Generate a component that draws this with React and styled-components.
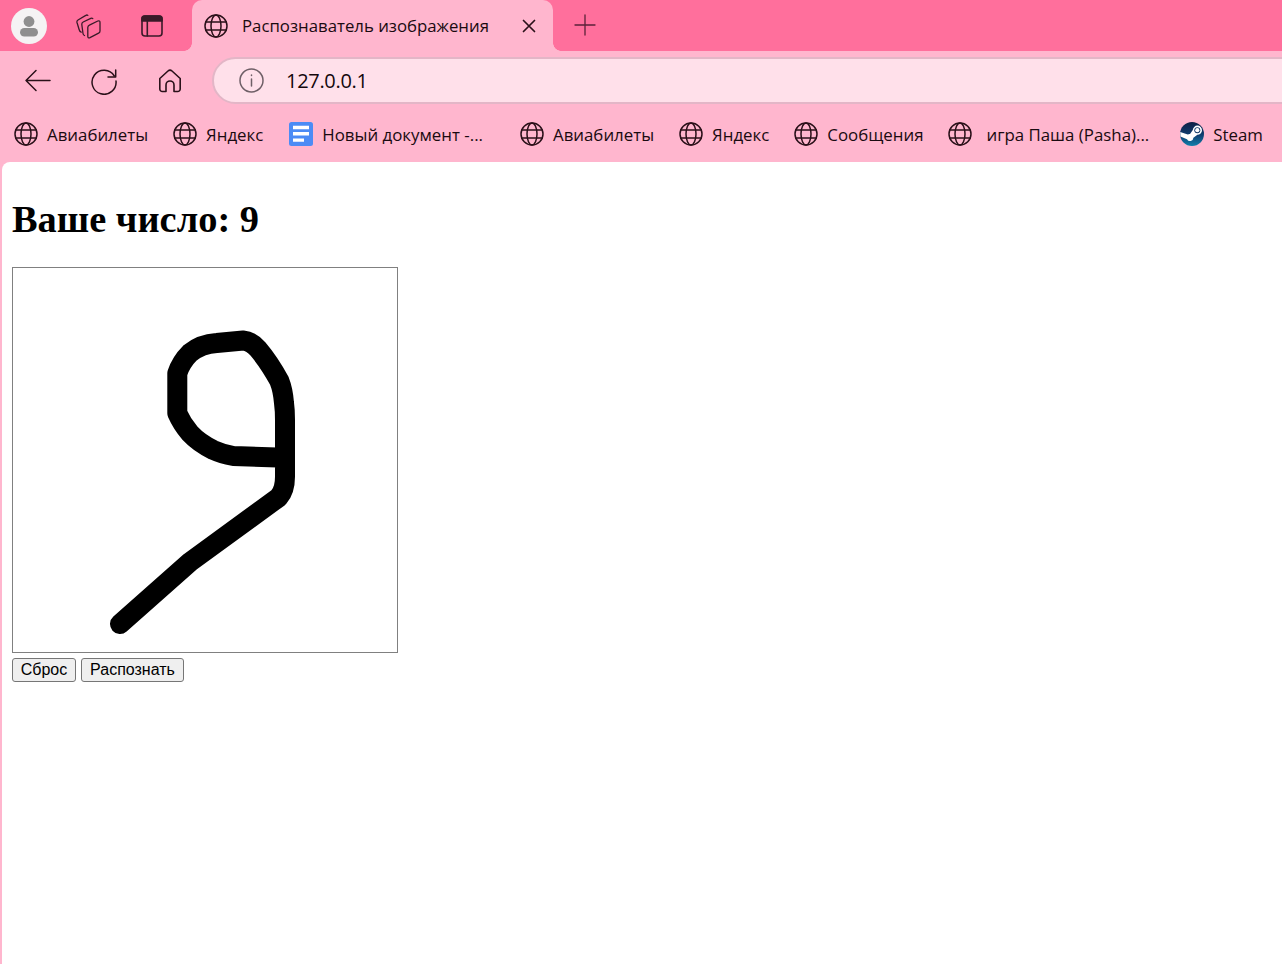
import React from "react";
import styled, { createGlobalStyle } from "styled-components";

const GlobalStyle = createGlobalStyle`
  html, body {
    margin: 0;
    padding: 0;
    height: 100%;
    overflow: hidden;
  }
  #root {
    height: 100%;
  }
`;

const Window = styled.div`
  height: 964px;
  display: flex;
  flex-direction: column;
  background: #ffb6ce;
  font-family: "Open Sans", "Noto Sans", sans-serif;
  color: #1a0a10;
  overflow: hidden;
`;

const TabStrip = styled.div`
  height: 51px;
  flex: none;
  display: flex;
  align-items: stretch;
  background: #ff6f9c;
`;

const StripLeft = styled.div`
  width: 192px;
  flex: none;
  display: flex;
  align-items: center;
  padding-left: 11px;
  box-sizing: border-box;
`;

const Avatar = styled.div`
  width: 36px;
  height: 36px;
  border-radius: 50%;
  background: #f5f3f4;
  display: flex;
  align-items: center;
  justify-content: center;
`;

const StripButton = styled.div`
  width: 26px;
  height: 26px;
  display: flex;
  align-items: center;
  justify-content: center;
  margin-left: ${(p) => p.$gap}px;
`;

const Tab = styled.div`
  position: relative;
  width: 361px;
  flex: none;
  display: flex;
  align-items: center;
  box-sizing: border-box;
  padding: 0 16px 0 12px;
  background: #ffb6ce;
  border-radius: 10px 10px 0 0;

  &::before,
  &::after {
    content: "";
    position: absolute;
    bottom: 0;
    width: 8px;
    height: 8px;
    background: radial-gradient(circle at var(--corner), #ff6f9c 7.5px, #ffb6ce 8px);
  }
  &::before {
    --corner: 0 0;
    left: -8px;
  }
  &::after {
    --corner: 100% 0;
    right: -8px;
  }
`;

const TabTitle = styled.span`
  flex: 1;
  margin-left: 14px;
  font-size: 16.8px;
  white-space: nowrap;
`;

const NewTab = styled.div`
  width: 24px;
  height: 24px;
  margin: 13px 0 0 20px;
`;

const Toolbar = styled.div`
  height: 59px;
  flex: none;
  display: flex;
  align-items: center;
`;

const NavButton = styled.div`
  width: 28px;
  height: 28px;
  flex: none;
  display: flex;
  align-items: center;
  justify-content: center;
  margin-left: ${(p) => p.$gap}px;
`;

const AddressBar = styled.div`
  flex: 1;
  height: 47px;
  margin: 0 -30px 0 28px;
  box-sizing: border-box;
  display: flex;
  align-items: center;
  padding-left: 25px;
  border: 2px solid #e3b6c7;
  border-radius: 24px;
  background: #ffe0ea;
`;

const Url = styled.span`
  margin-left: 22px;
  font-size: 20px;
  letter-spacing: -0.3px;
  color: #14080c;
`;

const Bookmarks = styled.div`
  height: 52px;
  flex: none;
  box-sizing: border-box;
  padding: 0 0 4px 14px;
  display: flex;
  align-items: center;
  white-space: nowrap;
`;

const Bookmark = styled.div`
  display: flex;
  align-items: center;
  gap: ${(p) => p.$gap || 9}px;
  margin-right: ${(p) => p.$after || 25}px;
  font-size: 16.85px;
  flex: none;
`;

const Page = styled.main`
  flex: 1;
  margin-left: 2px;
  padding: 39px 10px 0;
  background: #fff;
  border-radius: 8px 0 0 0;
  color: #000;
  font-family: "Liberation Serif", serif;
`;

const Heading = styled.h1`
  margin: 0 0 29px;
  font-size: 38.4px;
  line-height: 37px;
  font-weight: 700;
`;

const Board = styled.div`
  width: 384px;
  height: 384px;
  border: 1px solid #808080;
  background: #fff;
`;

const Actions = styled.div`
  display: flex;
  gap: 5px;
  margin-top: 5px;
`;

const Button = styled.button`
  width: ${(p) => p.$width}px;
  height: 24px;
  padding: 0 0 1px;
  border: 1px solid #767676;
  border-radius: 3px;
  background: #efefef;
  color: #000;
  font-family: "Liberation Sans", sans-serif;
  font-size: 16px;
`;

const Icon = styled.svg`
  display: block;
  flex: none;
  fill: none;
  stroke: ${(p) => p.$stroke || "#2a1019"};
  stroke-width: ${(p) => p.$weight || 1.5};
  stroke-linecap: round;
  stroke-linejoin: round;
`;

const Globe = () => (
  <Icon width="24" height="24" viewBox="0 0 24 24" $weight={1.5}>
    <circle cx="12" cy="12" r="11" />
    <ellipse cx="12" cy="12" rx="5" ry="11" />
    <path d="M1.8 8h20.4M1.8 16h20.4" />
  </Icon>
);

const DocIcon = () => (
  <svg width="24" height="24" viewBox="0 0 24 24" style={{ display: "block", flex: "none" }}>
    <rect width="24" height="24" rx="2.5" fill="#4c8bf5" />
    <path d="M4 3.7h16v3.6H4zM4 10h16v3.6H4zM4 16.4h11v3.4H4z" fill="#fff" />
  </svg>
);

const SteamIcon = () => (
  <svg width="24" height="24" viewBox="0 0 24 24" style={{ display: "block", flex: "none" }}>
    <defs>
      <linearGradient id="steamFill" x1="0" y1="0" x2="0" y2="1">
        <stop offset="0" stopColor="#0f1f45" />
        <stop offset="0.55" stopColor="#0f3f72" />
        <stop offset="1" stopColor="#1280ac" />
      </linearGradient>
    </defs>
    <circle cx="12" cy="12" r="12" fill="url(#steamFill)" />
    <path d="M0.4 14.4 7 17.2a3.4 3.4 0 0 0 6.4-1.5l4-2.9a4.6 4.6 0 1 0-4.6-4.7l-2.8 4a3.4 3.4 0 0 0-2.2.5L0.2 10z" fill="#fff" />
    <circle cx="17.3" cy="8.2" r="3" fill="#123a68" />
    <circle cx="17.3" cy="8.2" r="2.1" fill="#fff" />
  </svg>
);

const Digit = () => (
  <svg width="384" height="384" viewBox="0 0 384 384" style={{ display: "block" }}>
    <path
      d="M272 189.7 L220.3 188 Q209 186 200.3 182 Q186 175 177 165.3 Q169 156 164.3 145.3 L164.3 105.3 Q168 94 177 85 Q188 76 203.7 75 L230.3 72.5 Q238 73 245 81 Q256 94 266.3 112.7 Q270 122 271 135 Q272 142 272 152 L272 208.7 Q272 222 265.7 229.3 L177 294 L107 356"
      fill="none"
      stroke="#000"
      strokeWidth="20"
      strokeLinecap="round"
      strokeLinejoin="round"
    />
  </svg>
);

const bookmarks = [
  { title: "Авиабилеты", icon: <Globe /> },
  { title: "Яндекс", icon: <Globe />, after: 26 },
  { title: "Новый документ -...", icon: <DocIcon />, after: 37 },
  { title: "Авиабилеты", icon: <Globe /> },
  { title: "Яндекс", icon: <Globe /> },
  { title: "Сообщения", icon: <Globe /> },
  { title: "игра Паша (Pasha)...", icon: <Globe />, gap: 14, after: 31 },
  { title: "Steam", icon: <SteamIcon /> },
];

export default function App() {
  return (
    <Window>
      <GlobalStyle />
      <TabStrip>
        <StripLeft>
          <Avatar>
            <svg width="24" height="24" viewBox="0 0 24 24">
              <circle cx="12" cy="7.5" r="5.4" fill="#8f8f8f" />
              <rect x="3" y="14" width="18" height="8.6" rx="4.3" fill="#8f8f8f" />
            </svg>
          </Avatar>
          <StripButton $gap={29}>
            <Icon width="26" height="26" viewBox="0 0 26 26" $weight={1.3} $stroke="#3a1a28">
              <path d="M5.2 19.2 Q3.8 18.8 3.2 16.8 L1 9.5 Q.6 7.8 2 7 L9.8 2.4 Q11 1.6 11.8 2.4" />
              <path d="M8.5 22.5 Q7.2 22 7 20.5 L5.8 11.5 Q5.6 9.8 7.2 9 L14.8 5.4 Q16 4.8 16.8 5.6" />
              <path d="M11.8 14.5 Q11.8 12.9 13.4 12.2 L21.8 8 Q24 7.2 24 9.5 V18 Q24 19.5 22.6 20.2 L14 24.6 Q11.8 25.5 11.8 23.2 Z" />
            </Icon>
          </StripButton>
          <StripButton $gap={37}>
            <Icon width="22" height="22" viewBox="0 0 22 22" $weight={1.6} $stroke="#3a1a28">
              <rect x="1" y="1" width="20" height="20" rx="3" />
              <path d="M1 3.5 Q1 1 4 1 H18 Q21 1 21 3.5 V6 H1 Z" fill="#3a1a28" />
              <path d="M6.3 6v15" />
            </Icon>
          </StripButton>
        </StripLeft>
        <Tab>
          <Globe />
          <TabTitle>Распознаватель изображения</TabTitle>
          <Icon width="16" height="16" viewBox="0 0 16 16" $weight={1.7}>
            <path d="M2.5 2.5l11 11M13.5 2.5l-11 11" />
          </Icon>
        </Tab>
        <NewTab>
          <Icon width="24" height="24" viewBox="0 0 24 24" $weight={1.3} $stroke="#5a2238">
            <path d="M12 2v20M2 12h20" />
          </Icon>
        </NewTab>
      </TabStrip>
      <Toolbar>
        <NavButton $gap={24}>
          <Icon width="28" height="28" viewBox="0 0 28 28" $weight={1.5}>
            <path d="M2 13.5h24M12 3.5 2 13.5l10 10" />
          </Icon>
        </NavButton>
        <NavButton $gap={38}>
          <Icon width="28" height="28" viewBox="0 0 28 28" $weight={1.5}>
            <path d="M24.3 9A12 12 0 1 0 26 14" />
            <path d="M25.7 3v7H18" />
          </Icon>
        </NavButton>
        <NavButton $gap={38}>
          <Icon width="26" height="26" viewBox="0 0 26 26" $weight={1.6}>
            <path d="M2.8 10.5 11 3a3 3 0 0 1 4 0l8.2 7.5V21a2.5 2.5 0 0 1-2.5 2.5H17V17a4 4 0 0 0-8 0v6.5H5.3A2.5 2.5 0 0 1 2.8 21z" />
          </Icon>
        </NavButton>
        <AddressBar>
          <Icon width="25" height="25" viewBox="0 0 25 25" $weight={1.5} $stroke="#6f5f67">
            <circle cx="12.5" cy="12.5" r="11.5" />
            <path d="M12.5 11v7M12.5 7v.6" />
          </Icon>
          <Url>127.0.0.1</Url>
        </AddressBar>
      </Toolbar>
      <Bookmarks>
        {bookmarks.map((b, i) => (
          <Bookmark key={i} $gap={b.gap} $after={b.after}>
            {b.icon}
            {b.title}
          </Bookmark>
        ))}
      </Bookmarks>
      <Page>
        <Heading>Ваше число: 9</Heading>
        <Board>
          <Digit />
        </Board>
        <Actions>
          <Button $width={64}>Сброс</Button>
          <Button $width={103}>Распознать</Button>
        </Actions>
      </Page>
    </Window>
  );
}
